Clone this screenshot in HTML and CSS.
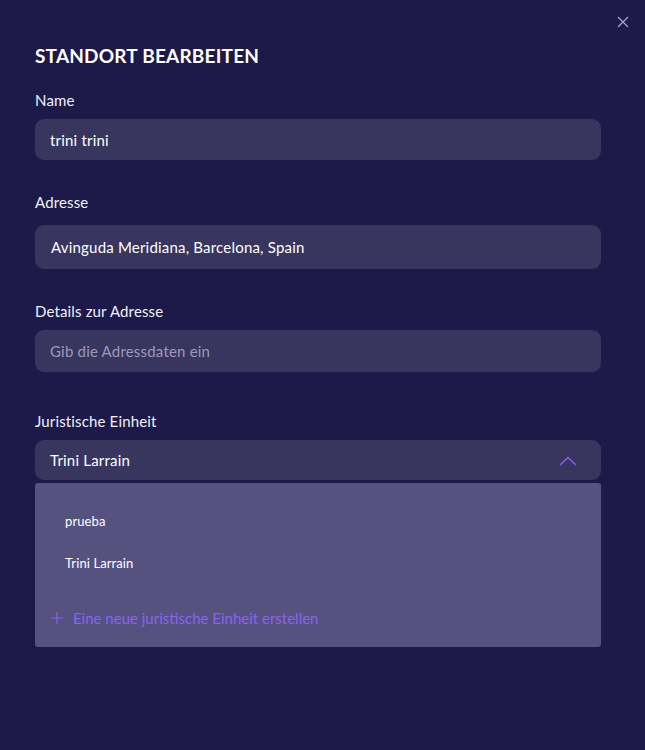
FILE: index.html
```html
<!DOCTYPE html>
<html lang="de">
<head>
<meta charset="utf-8">
<title>Standort bearbeiten</title>
<link rel="stylesheet" href="styles.css">
</head>
<body>
<div class="modal">
  <button class="close" aria-label="Schließen">
    <svg width="12" height="12" viewBox="0 0 12 12"><path d="M1 1L11 11M11 1L1 11" stroke="#a9a7c9" stroke-width="1.2" fill="none"/></svg>
  </button>
  <h2 class="title">STANDORT BEARBEITEN</h2>

  <div class="field f-name">
    <label class="label">Name</label>
    <div class="input h41">trini trini</div>
  </div>

  <div class="field f-addr">
    <label class="label">Adresse</label>
    <div class="input h44 addr">Avinguda Meridiana, Barcelona, Spain</div>
  </div>

  <div class="field f-details">
    <label class="label">Details zur Adresse</label>
    <div class="input h42 placeholder">Gib die Adressdaten ein</div>
  </div>

  <div class="field f-entity">
    <label class="label">Juristische Einheit</label>
    <div class="input h40 select">
      <span>Trini Larrain</span>
      <svg class="chev" width="18" height="10" viewBox="0 0 18 10"><path d="M1 9L9 1.5L17 9" stroke="#8b5cf6" stroke-width="1.6" fill="none"/></svg>
    </div>
    <div class="dropdown">
      <div class="option">prueba</div>
      <div class="option">Trini Larrain</div>
      <div class="create">
        <svg width="12" height="12" viewBox="0 0 12 12"><path d="M6 0V12M0 6H12" stroke="#8b5cf6" stroke-width="1.2" fill="none"/></svg>
        <span>Eine neue juristische Einheit erstellen</span>
      </div>
    </div>
  </div>
</div>
</body>
</html>
```
FILE: styles.css
```css
html, body {
  margin: 0;
  padding: 0;
  background: #1d1a4a;
  height: 100%;
}
body {
  font-family: "Lato", "Noto Sans", sans-serif;
  color: #f1f0f8;
}
.modal {
  position: relative;
  width: 645px;
  height: 750px;
  box-sizing: border-box;
  padding: 44px 44px 0 35px;
}
.close {
  position: absolute;
  top: 16px;
  right: 16px;
  width: 12px;
  height: 12px;
  padding: 0;
  border: 0;
  background: none;
  display: flex;
}
.title {
  margin: 0;
  font-size: 19px;
  line-height: 24px;
  font-weight: 700;
  color: #ffffff;
  letter-spacing: 0.2px;
}
.field {
  display: flex;
  flex-direction: column;
}
.label {
  font-size: 15px;
  line-height: 20px;
  color: #f1f0f8;
  letter-spacing: 0.15px;
}
.f-name { margin-top: 22px; }
.f-name .label { margin-bottom: 9px; }
.f-addr { margin-top: 32px; }
.f-addr .label { margin-bottom: 13px; }
.f-details { margin-top: 32px; }
.f-details .label { margin-bottom: 9px; }
.f-entity { margin-top: 39px; }
.f-entity .label { margin-bottom: 9px; }

.input {
  background: #38355f;
  border-radius: 9px;
  padding: 0 15px;
  display: flex;
  align-items: center;
  font-size: 15px;
  letter-spacing: 0.2px;
  color: #ffffff;
}
.addr { padding-left: 16px; }
.h40 { height: 40px; }
.h41 { height: 41px; }
.h42 { height: 42px; }
.h44 { height: 44px; }
.placeholder { color: #9c9abb; }
.select {
  justify-content: space-between;
  padding-right: 24px;
}
.chev { margin-top: 1px; }
.dropdown {
  margin-top: 3px;
  background: #55527f;
  border-radius: 3px;
  height: 164px;
  box-sizing: border-box;
  padding: 28px 0 0 30px;
  display: flex;
  flex-direction: column;
}
.option {
  font-size: 13px;
  line-height: 20px;
  color: #ffffff;
  height: 42px;
  letter-spacing: 0.1px;
}
.create {
  margin-top: 14px;
  margin-left: -14px;
  display: flex;
  align-items: center;
  gap: 10px;
  font-size: 15px;
  color: #8b62f0;
}
```
